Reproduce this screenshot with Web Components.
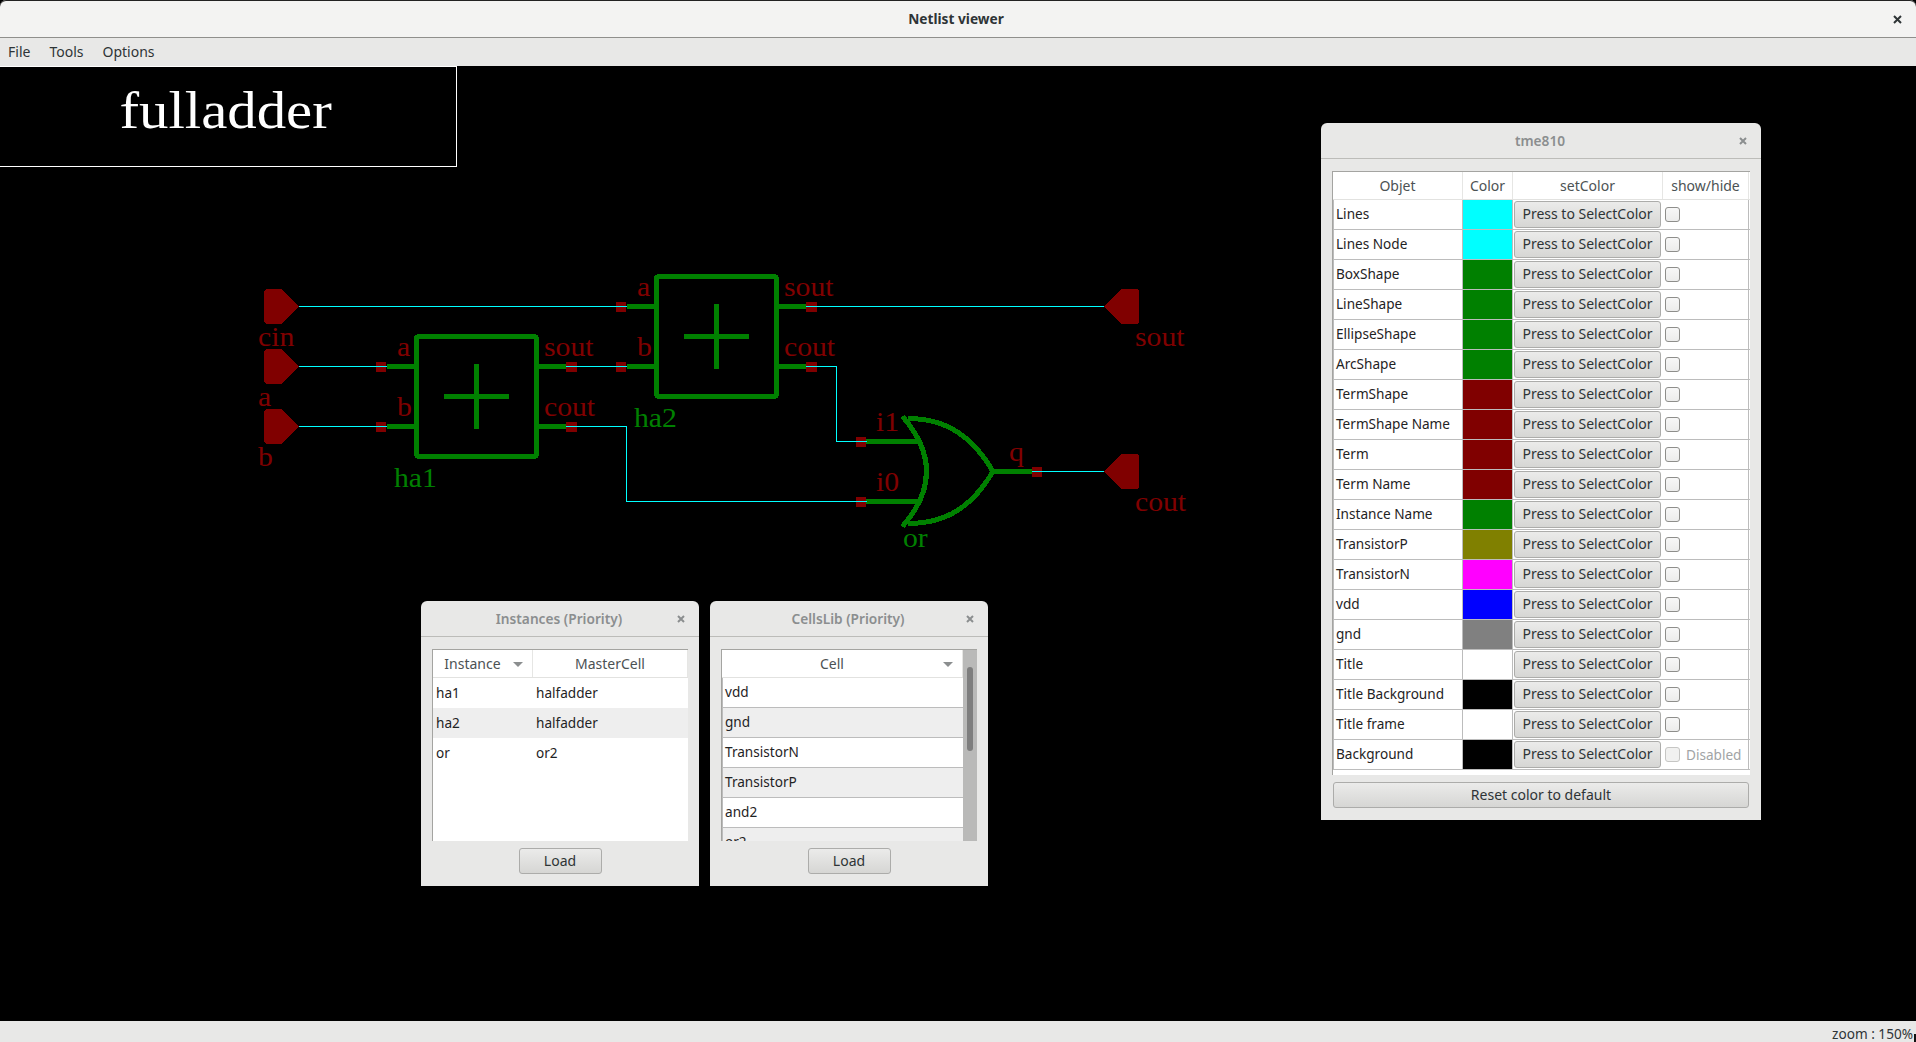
<!DOCTYPE html>
<html>
<head>
<meta charset="utf-8">
<title>Netlist viewer</title>
<style>
	html, body { margin: 0; height: 100%; background: #000; overflow: hidden; }
	body { font: 14px "Noto Sans", sans-serif; color: #2e3436; }
</style>
</head>
<body>
<nl-app>
	<nl-titlebar slot="top">Netlist viewer</nl-titlebar>
	<nl-menubar slot="top"><span>File</span><span>Tools</span><span>Options</span></nl-menubar>
	<nl-canvas>
		<nl-title-frame>fulladder</nl-title-frame>
		<nl-schematic></nl-schematic>

		<nl-dialog heading="Instances (Priority)" style="--x:421px;--y:535px;--w:278px;--h:285px">
			<nl-tree style="--cols:100px 1fr">
				<nl-tree-head slot="head"><span class="sort">Instance<nl-arrow></nl-arrow></span><span>MasterCell</span></nl-tree-head>
				<nl-tree-row><span>ha1</span><span>halfadder</span></nl-tree-row>
				<nl-tree-row alt><span>ha2</span><span>halfadder</span></nl-tree-row>
				<nl-tree-row><span>or</span><span>or2</span></nl-tree-row>
			</nl-tree>
			<nl-button slot="footer" style="width:83px">Load</nl-button>
		</nl-dialog>

		<nl-dialog heading="CellsLib (Priority)" style="--x:710px;--y:535px;--w:278px;--h:285px">
			<nl-tree scrollbar style="--cols:241px">
				<nl-tree-head slot="head"><span class="sort">Cell<nl-arrow></nl-arrow></span></nl-tree-head>
				<nl-tree-row lined><span>vdd</span></nl-tree-row>
				<nl-tree-row lined alt><span>gnd</span></nl-tree-row>
				<nl-tree-row lined><span>TransistorN</span></nl-tree-row>
				<nl-tree-row lined alt><span>TransistorP</span></nl-tree-row>
				<nl-tree-row lined><span>and2</span></nl-tree-row>
				<nl-tree-row lined alt><span>or2</span></nl-tree-row>
			</nl-tree>
			<nl-button slot="footer" style="width:83px">Load</nl-button>
		</nl-dialog>

		<nl-dialog heading="tme810" style="--x:1321px;--y:57px;--w:440px;--h:697px">
			<nl-tree id="colors" style="--cols:130px 50px 150px 86px">
				<nl-tree-head slot="head"><span>Objet</span><span>Color</span><span>setColor</span><span>show/hide</span></nl-tree-head>
			</nl-tree>
			<nl-button slot="footer" style="width:calc(100% - 2px)">Reset color to default</nl-button>
		</nl-dialog>
	</nl-canvas>
	<nl-statusbar slot="bottom">zoom : 150%</nl-statusbar>
</nl-app>

<script>
class NlApp extends HTMLElement {
	connectedCallback() {
		this.attachShadow({ mode: "open" }).innerHTML = `
			<style>
				:host { display: flex; flex-direction: column; height: 100vh; }
				::slotted(nl-canvas) { flex: 1; }
			</style>
			<slot name="top"></slot>
			<slot></slot>
			<slot name="bottom"></slot>
		`;
	}
}

class NlTitlebar extends HTMLElement {
	connectedCallback() {
		this.attachShadow({ mode: "open" }).innerHTML = `
			<style>
				:host {
					display: flex;
					align-items: center;
					justify-content: center;
					position: relative;
					box-sizing: border-box;
					height: 38px;
					padding: 0 4px 1px 0;
					background: #f3f3f2;
					border-bottom: 1px solid #8f8f8c;
					border-radius: 6px 6px 0 0;
					box-shadow: inset 0 1px 0 #222;
					font-weight: 700;
					font-size: 13.7px;
					color: #2e3436;
				}
				svg { position: absolute; right: 14px; top: 15px; }
			</style>
			<slot></slot>
			<svg width="9" height="9" viewBox="0 0 9 9"><path d="M1 1 8 8M8 1 1 8" stroke="#2e3436" stroke-width="2"/></svg>
		`;
	}
}

class NlMenubar extends HTMLElement {
	connectedCallback() {
		this.attachShadow({ mode: "open" }).innerHTML = `
			<style>
				:host {
					display: flex;
					align-items: center;
					gap: 19px;
					box-sizing: border-box;
					height: 28px;
					padding: 0 8px 2px;
					background: #e8e8e7;
					font-size: 14px;
					color: #2e3436;
				}
			</style>
			<slot></slot>
		`;
	}
}

class NlStatusbar extends HTMLElement {
	connectedCallback() {
		this.attachShadow({ mode: "open" }).innerHTML = `
			<style>
				:host {
					display: flex;
					align-items: center;
					justify-content: flex-end;
					position: relative;
					box-sizing: border-box;
					height: 21px;
					padding: 3px 3px 0 0;
					background: #e8e8e7;
					font-size: 13.6px;
					color: #2e3436;
				}
				i { position: absolute; right: 0; bottom: 0; width: 2px; height: 8px; background: #111; }
			</style>
			<slot></slot><i></i>
		`;
	}
}

class NlCanvas extends HTMLElement {
	connectedCallback() {
		this.attachShadow({ mode: "open" }).innerHTML = `
			<style>:host { display: block; position: relative; background: #000; overflow: hidden; }</style>
			<slot></slot>
		`;
	}
}

class NlTitleFrame extends HTMLElement {
	connectedCallback() {
		this.attachShadow({ mode: "open" }).innerHTML = `
			<style>
				:host {
					display: flex;
					justify-content: center;
					position: absolute;
					left: 0;
					top: 0;
					box-sizing: border-box;
					width: 457px;
					height: 101px;
					padding: 13px 4px 0 0;
					border: 1px solid #fff;
					border-left: 0;
					font: 53px/1.15 "Liberation Serif", serif;
					color: #fff;
				}
				span { display: inline-block; transform: scaleX(1.11); }
			</style>
			<span><slot></slot></span>
		`;
	}
}

// schematic drawn in page coordinates, so the viewBox starts below the menu bar
class NlSchematic extends HTMLElement {
	connectedCallback() {
		const green = "#008000";
		const red = "#800000";

		const box = (x, y) => `
			<rect x="${x}" y="${y}" width="120" height="120" rx="2" fill="none" stroke="${green}" stroke-width="5"/>
			<path d="M${x + 27.5} ${y + 60}h65M${x + 60} ${y + 27.5}v65" stroke="${green}" stroke-width="5"/>
			<path d="M${x - 30} ${y + 30}h30M${x - 30} ${y + 90}h30M${x + 120} ${y + 30}h30M${x + 120} ${y + 90}h30" stroke="${green}" stroke-width="5"/>
		`;
		const node = (x, y, w = 10) => `<rect x="${x}" y="${y - 4.5}" width="${w}" height="10" fill="${red}"/>`;
		const termIn = (y) => `<path d="M266 ${y - 17.5}h16l17 17.5-17 17.5h-16l-2-2v-31z" fill="${red}"/>`;
		const termOut = (y) => `<path d="M1137 ${y - 17.5}h-16l-17 17.5 17 17.5h16l2-2v-31z" fill="${red}"/>`;
		const label = (x, y, text, color = red) => `<text transform="translate(${x} ${y + 1}) scale(1.1 1)" fill="${color}">${text}</text>`;

		this.attachShadow({ mode: "open" }).innerHTML = `
			<style>
				:host { display: block; position: absolute; left: 0; top: 0; width: 1916px; height: 955px; }
				svg { display: block; shape-rendering: crispEdges; }
				text { font: 27px "Liberation Serif", serif; }
			</style>
			<svg width="1916" height="955" viewBox="0 66 1916 955">
				${box(416.5, 336.5)}
				${box(656.5, 276.5)}

				<path d="M866 441.5h52M866 501.5h52M993 471.5h39" stroke="${green}" stroke-width="5" fill="none"/>
				<path d="M902.5 416.5Q950.5 471.5 902.5 526.5" stroke="${green}" stroke-width="5" fill="none"/>
				<path d="M908 418.5C946 418.5 972 436 993 471.5 972 507 946 523.5 908 523.5" stroke="${green}" stroke-width="5" fill="none"/>

				${node(376, 366.5)}${node(376, 426.5)}
				${node(566, 366.5, 11)}${node(566, 426.5, 11)}
				${node(616, 306.5)}${node(616, 366.5)}
				${node(806, 306.5, 11)}${node(806, 366.5, 11)}
				${node(856, 441.5)}${node(856, 501.5)}
				${node(1032, 471.5)}

				<g stroke="#0ff" stroke-width="1" fill="none">
					<path d="M298 306.5H627M298 366.5H387M298 426.5H387"/>
					<path d="M566 366.5H627M566 426.5H626.5V501.5H867"/>
					<path d="M806 306.5H1105M806 366.5H836.5V441.5H867M1032 471.5H1105"/>
				</g>

				${termIn(306.5)}${termIn(366.5)}${termIn(426.5)}
				${termOut(306.5)}${termOut(471.5)}

				${label(258, 345, "cin")}${label(258, 405, "a")}${label(258, 465, "b")}
				${label(397, 355, "a")}${label(397, 415, "b")}
				${label(544, 355, "sout")}${label(544, 415, "cout")}
				${label(637, 295, "a")}${label(637, 355, "b")}
				${label(784, 295, "sout")}${label(784, 355, "cout")}
				${label(876, 430, "i1")}${label(876, 490, "i0")}${label(1009, 460, "q")}
				${label(1135, 345, "sout")}${label(1135, 510, "cout")}
				${label(394, 486, "ha1", green)}${label(634, 426, "ha2", green)}${label(903, 546, "or", green)}
			</svg>
		`;
	}
}

class NlDialog extends HTMLElement {
	connectedCallback() {
		this.attachShadow({ mode: "open" }).innerHTML = `
			<style>
				:host {
					display: flex;
					flex-direction: column;
					position: absolute;
					left: var(--x);
					top: var(--y);
					width: var(--w);
					height: var(--h);
					background: #e8e8e7;
					border-radius: 6px 6px 0 0;
				}
				header {
					display: flex;
					align-items: center;
					justify-content: center;
					position: relative;
					flex: none;
					box-sizing: border-box;
					height: 36px;
					padding: 0 2px 1px 0;
					border-bottom: 1px solid #bcbcb9;
					font-weight: 600;
					font-size: 13.7px;
					color: #8b8e8f;
				}
				svg { position: absolute; right: 14px; top: 14px; }
				.body {
					display: flex;
					flex-direction: column;
					flex: 1;
					min-height: 0;
					padding: 12px 11px 12px;
				}
				.footer { display: flex; justify-content: center; flex: none; margin-top: 7px; }
				::slotted(nl-tree) { flex: 1; min-height: 0; }
			</style>
			<header>
				${this.getAttribute("heading")}
				<svg width="8" height="8" viewBox="0 0 8 8"><path d="M1 1 7 7M7 1 1 7" stroke="#8b8e8f" stroke-width="2"/></svg>
			</header>
			<div class="body">
				<slot></slot>
				<div class="footer"><slot name="footer"></slot></div>
			</div>
		`;
	}
}

class NlTree extends HTMLElement {
	connectedCallback() {
		const bar = this.hasAttribute("scrollbar") ? `<div class="bar"><i></i></div>` : "";
		this.attachShadow({ mode: "open" }).innerHTML = `
			<style>
				:host {
					display: block;
					position: relative;
					overflow: hidden;
					background: #fff;
					border-top: 1px solid #a4a4a1;
					border-left: 1px solid #a4a4a1;
				}
				.bar { position: absolute; top: 0; right: 0; bottom: 0; width: 14px; background: #b9b9b8; }
				.bar i { position: absolute; left: 4px; top: 17px; width: 6px; height: 84px; border-radius: 3px; background: #7e7e7e; }
			</style>
			<slot name="head"></slot>
			<slot></slot>
			${bar}
		`;
	}
}

class NlTreeHead extends HTMLElement {
	connectedCallback() {
		this.attachShadow({ mode: "open" }).innerHTML = `
			<style>
				:host {
					display: grid;
					grid-template-columns: var(--cols);
					box-sizing: border-box;
					height: 28px;
					border-bottom: 1px solid #e2e2e0;
					color: #4c5254;
				}
				::slotted(span) {
					display: flex;
					align-items: center;
					justify-content: center;
					position: relative;
					padding-bottom: 1px;
					border-right: 1px solid #e6e6e4;
				}
				::slotted(.sort) { padding-right: 20px; }
			</style>
			<slot></slot>
		`;
	}
}

class NlArrow extends HTMLElement {
	connectedCallback() {
		this.attachShadow({ mode: "open" }).innerHTML = `
			<style>
				:host {
					position: absolute;
					right: 9px;
					top: 12px;
					border: 5px solid transparent;
					border-top-color: #8b8e8f;
					border-bottom: 0;
				}
			</style>
		`;
	}
}

class NlTreeRow extends HTMLElement {
	connectedCallback() {
		this.attachShadow({ mode: "open" }).innerHTML = `
			<style>
				:host {
					display: grid;
					grid-template-columns: var(--cols);
					grid-template-rows: 100%;
					box-sizing: border-box;
					height: 30px;
					font-size: 13.6px;
					color: #1f2324;
				}
				:host([alt]) { background: #eeeeee; }
				:host([lined]) { border-bottom: 1px solid #bcbcbc; box-shadow: inset 1px 0 #bcbcbc; }
				::slotted(span) { display: flex; align-items: center; box-sizing: border-box; padding: 0 0 2px 3px; min-width: 0; white-space: nowrap; }
			</style>
			<slot></slot>
		`;
	}
}

class NlSwatch extends HTMLElement {
	connectedCallback() {
		this.attachShadow({ mode: "open" }).innerHTML = `
			<style>:host { display: block; background: var(--swatch); border-right: 1px solid #bcbcbc; }</style>
		`;
	}
}

class NlButton extends HTMLElement {
	connectedCallback() {
		this.attachShadow({ mode: "open" }).innerHTML = `
			<style>
				:host {
					display: flex;
					align-items: center;
					justify-content: center;
					box-sizing: border-box;
					height: 26px;
					padding-bottom: 1px;
					border: 1px solid #acacaa;
					border-radius: 3px;
					background: linear-gradient(#ebebea, #d6d6d4);
					font-size: 14px;
					color: #2e3436;
				}
			</style>
			<slot></slot>
		`;
	}
}

class NlCheck extends HTMLElement {
	connectedCallback() {
		const disabled = this.hasAttribute("disabled");
		this.attachShadow({ mode: "open" }).innerHTML = `
			<style>
				:host { display: flex; align-items: center; gap: 6px; font-size: 13.6px; color: #a1a4a5; }
				i {
					flex: none;
					box-sizing: border-box;
					width: 15px;
					height: 15px;
					border: 1px solid ${disabled ? "#c6c6c4" : "#8e8e8b"};
					border-radius: 3px;
					background: ${disabled ? "#f1f1f0" : "linear-gradient(#f7f7f7, #ececeb)"};
				}
			</style>
			<i></i><slot></slot>
		`;
	}
}

// one row of the colour table
class NlColorRow extends HTMLElement {
	connectedCallback() {
		const color = this.getAttribute("color");
		const disabled = this.hasAttribute("disabled");
		this.attachShadow({ mode: "open" }).innerHTML = `
			<style>
				:host { display: block; }
				.name { border-right: 1px solid #bcbcbc; }
				.button { padding: 1px 2px 1px 1px !important; }
				nl-button { flex: 1; height: 27px; padding-bottom: 2px; }
				.check { padding: 0 0 1px 2px !important; border-right: 1px solid #bcbcbc; }
			</style>
			<nl-tree-row lined>
				<span class="name">${this.getAttribute("name")}</span>
				<nl-swatch style="--swatch:${color}"></nl-swatch>
				<span class="button"><nl-button>Press to SelectColor</nl-button></span>
				<span class="check"><nl-check ${disabled ? "disabled" : ""}>${disabled ? "Disabled" : ""}</nl-check></span>
			</nl-tree-row>
		`;
	}
}

customElements.define("nl-app", NlApp);
customElements.define("nl-titlebar", NlTitlebar);
customElements.define("nl-menubar", NlMenubar);
customElements.define("nl-statusbar", NlStatusbar);
customElements.define("nl-canvas", NlCanvas);
customElements.define("nl-title-frame", NlTitleFrame);
customElements.define("nl-schematic", NlSchematic);
customElements.define("nl-dialog", NlDialog);
customElements.define("nl-tree", NlTree);
customElements.define("nl-tree-head", NlTreeHead);
customElements.define("nl-arrow", NlArrow);
customElements.define("nl-tree-row", NlTreeRow);
customElements.define("nl-swatch", NlSwatch);
customElements.define("nl-button", NlButton);
customElements.define("nl-check", NlCheck);
customElements.define("nl-color-row", NlColorRow);

const colorRows = [
	["Lines", "#00ffff"], ["Lines Node", "#00ffff"], ["BoxShape", "#008000"], ["LineShape", "#008000"],
	["EllipseShape", "#008000"], ["ArcShape", "#008000"], ["TermShape", "#800000"], ["TermShape Name", "#800000"],
	["Term", "#800000"], ["Term Name", "#800000"], ["Instance Name", "#008000"], ["TransistorP", "#808000"],
	["TransistorN", "#ff00ff"], ["vdd", "#0000ff"], ["gnd", "#808080"], ["Title", "#ffffff"],
	["Title Background", "#000000"], ["Title frame", "#ffffff"], ["Background", "#000000"],
];
const colors = document.getElementById("colors");
colorRows.forEach(([name, color]) => {
	const row = document.createElement("nl-color-row");
	row.setAttribute("name", name);
	row.setAttribute("color", color);
	if (name === "Background") row.setAttribute("disabled", "");
	colors.append(row);
});
</script>
</body>
</html>
